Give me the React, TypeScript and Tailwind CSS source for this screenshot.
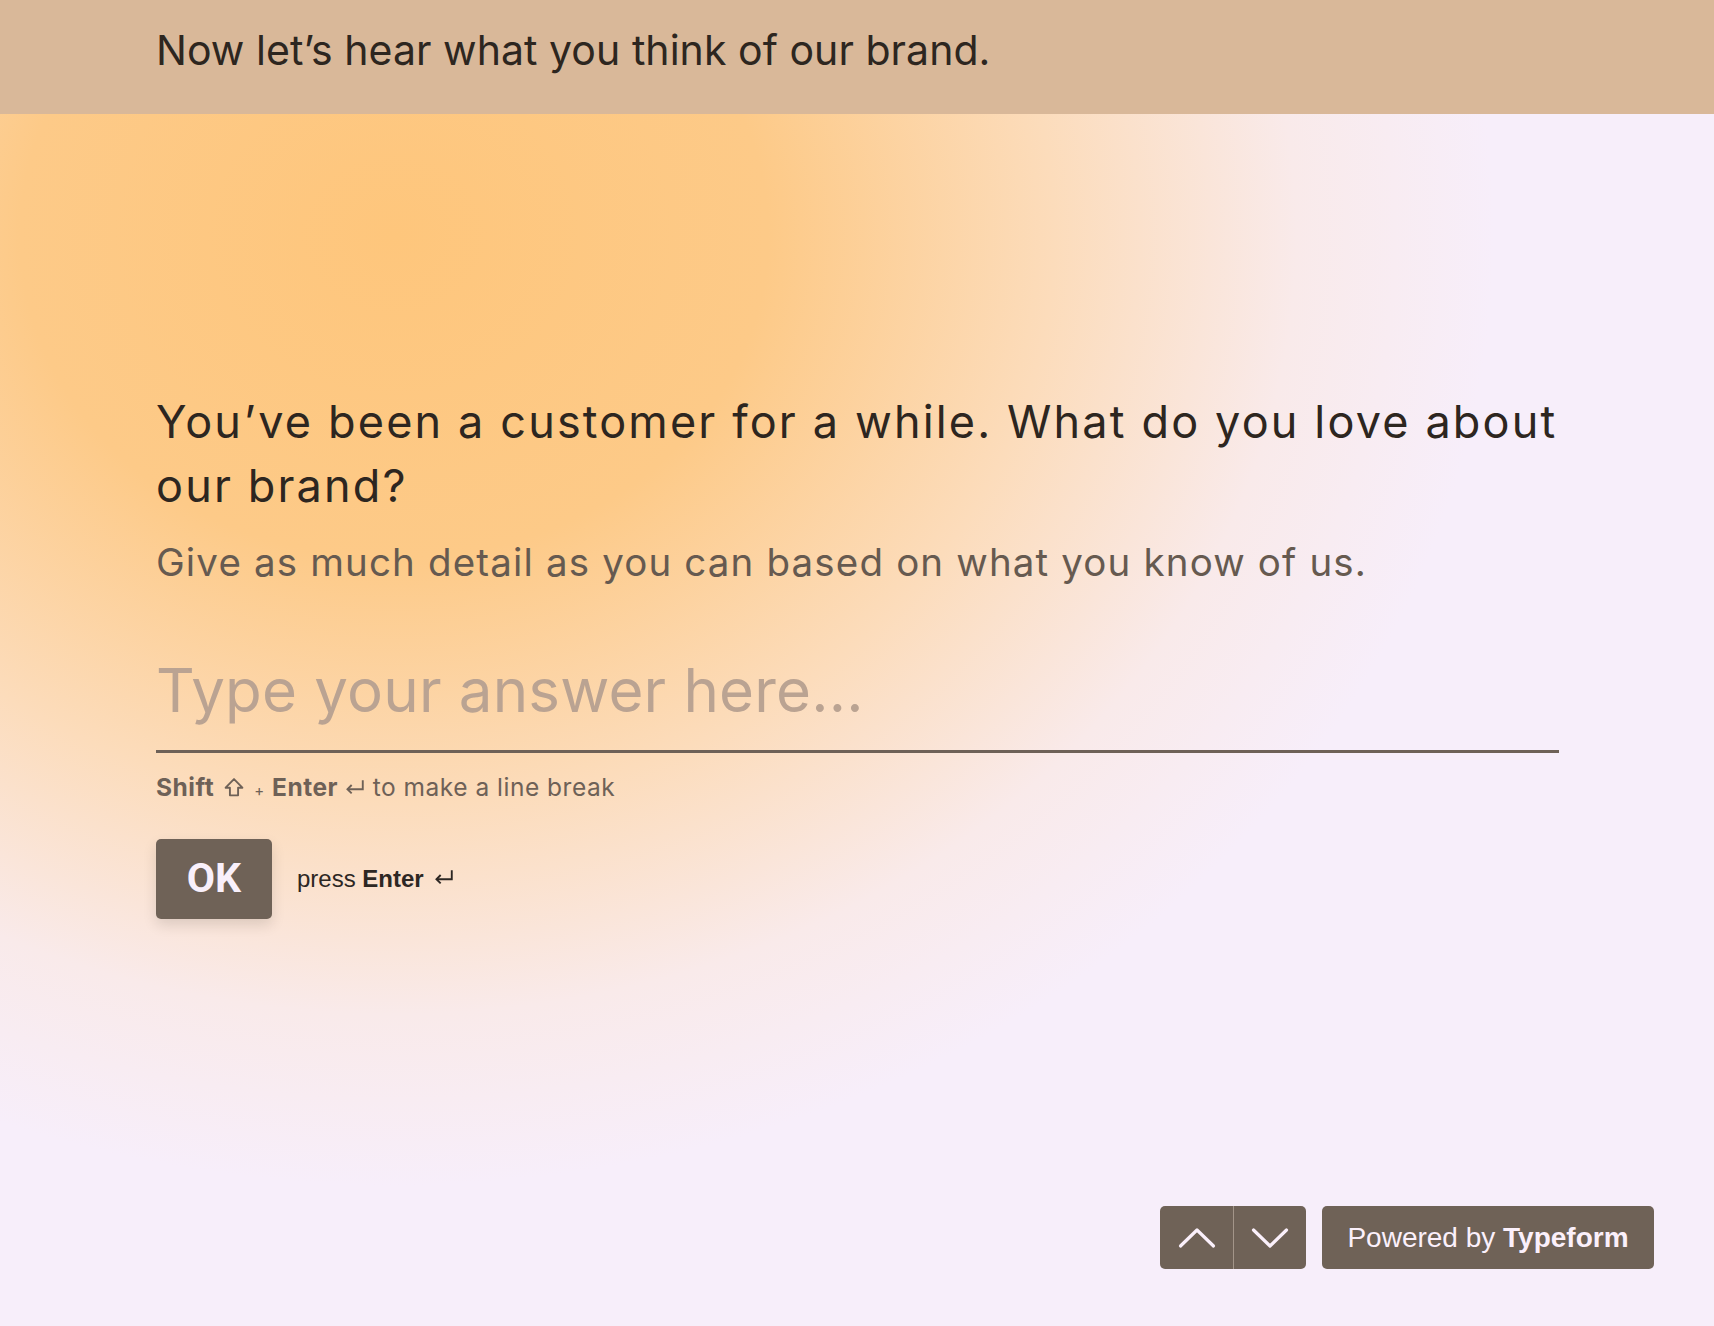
import React, { useState } from 'react';

const ShiftIcon = () => (
  <svg width="22" height="21" viewBox="0 0 21 20" fill="none" className="inline-block mx-[9px] -mt-[4px]">
    <path d="M10.5 2L2.5 10.2H6.6V17.5H14.4V10.2H18.5L10.5 2Z" stroke="#6e6157" strokeWidth="1.8" strokeLinejoin="round" />
  </svg>
);

const EnterIcon = ({ color = '#6e6157', size = 20 }: { color?: string; size?: number }) => (
  <svg width={size} height={size * 0.8} viewBox="0 0 18 14" fill="none" className="inline-block -mt-[4px]">
    <path d="M16 1V9H2.5" stroke={color} strokeWidth="1.7" />
    <path d="M6 5.2L2.2 9L6 12.8" stroke={color} strokeWidth="1.7" />
  </svg>
);

const Chevron = ({ up }: { up?: boolean }) => (
  <svg width="38" height="22" viewBox="0 0 38 22" fill="none">
    <path
      d={up ? 'M2.5 19L19 3L35.5 19' : 'M2.5 3L19 19L35.5 3'}
      stroke="#fbf0fb"
      strokeWidth="3.2"
      strokeLinecap="round"
      strokeLinejoin="round"
    />
  </svg>
);

export default function App() {
  const [answer, setAnswer] = useState('');

  return (
    <div className="relative min-h-[1326px] w-full overflow-hidden bg-[#f7eefa] font-['Inter',sans-serif]">
      {/* statement header */}
      <div className="h-[114px] bg-[#d9b899] px-[156px] pt-[30px]">
        <p className="text-[41px] leading-none tracking-[0.05px] text-[#2d2620]">
          Now let’s hear what you think of our brand.
        </p>
      </div>

      {/* question area */}
      <div className="min-h-[1212px] bg-[radial-gradient(ellipse_1100px_950px_at_23%_10%,#fec67c_0%,#fdca88_34%,#fcdcbb_60%,#f9eaea_82%,#f7eefa_100%)]">
        <div className="px-[156px] pt-[276px]">
          <h1 className="w-[1420px] text-[45px] leading-[64px] tracking-[2.15px] text-[#2d2620]">
            You’ve been a customer for a while. What do you love about our brand?
          </h1>
          <p className="mt-[18px] text-[38.5px] leading-[52px] tracking-[1.15px] text-[#665a50]">
            Give as much detail as you can based on what you know of us.
          </p>

          <div className="mt-[62px] w-[1403px]">
            <textarea
              rows={1}
              value={answer}
              onChange={(e) => setAnswer(e.target.value)}
              placeholder="Type your answer here..."
              className="block h-[103px] w-full resize-none overflow-hidden border-b-[3px] border-[#6e6157] bg-transparent pb-[20px] text-[60px] leading-[80px] tracking-[0.2px] text-[#4a3f37] outline-none placeholder:text-[#baa392]"
            />
          </div>

          <p className="mt-[18px] text-[24.5px] leading-[32px] tracking-[0.5px] text-[#6e6157]">
            <span className="font-bold">Shift</span>
            <ShiftIcon />
            <span className="text-[15px]">+</span>{' '}
            <span className="font-bold">Enter</span>{' '}
            <EnterIcon />{' '}
            to make a line break
          </p>

          <div className="mt-[32px] flex items-center">
            <button className="flex h-[80px] w-[116px] items-center justify-center rounded-[5px] bg-[#6f6257] font-['Roboto',sans-serif] text-[41px] font-bold text-[#f9f0fb] shadow-[0_6px_14px_rgba(0,0,0,0.12)]">
              OK
            </button>
            <span className="ml-[25px] flex items-center font-['Liberation_Sans',sans-serif] text-[24px] text-[#2d2723]">
              press&nbsp;<span className="font-bold">Enter</span>
              <span className="ml-[10px] flex items-center">
                <EnterIcon color="#2d2723" size={20} />
              </span>
            </span>
          </div>
        </div>
      </div>

      {/* bottom navigation */}
      <div className="absolute bottom-[57px] right-[60px] flex h-[63px] gap-[16px]">
        <div className="flex overflow-hidden rounded-[5px] bg-[#6f6257]">
          <button className="flex w-[73px] items-center justify-center">
            <Chevron up />
          </button>
          <div className="w-px bg-[#a39589]" />
          <button className="flex w-[72px] items-center justify-center">
            <Chevron />
          </button>
        </div>
        <div className="flex w-[332px] items-center justify-center rounded-[5px] bg-[#6f6257] font-['Liberation_Sans',sans-serif] text-[28px] text-[#fbf0fb]">
          Powered by&nbsp;<span className="font-bold">Typeform</span>
        </div>
      </div>
    </div>
  );
}
